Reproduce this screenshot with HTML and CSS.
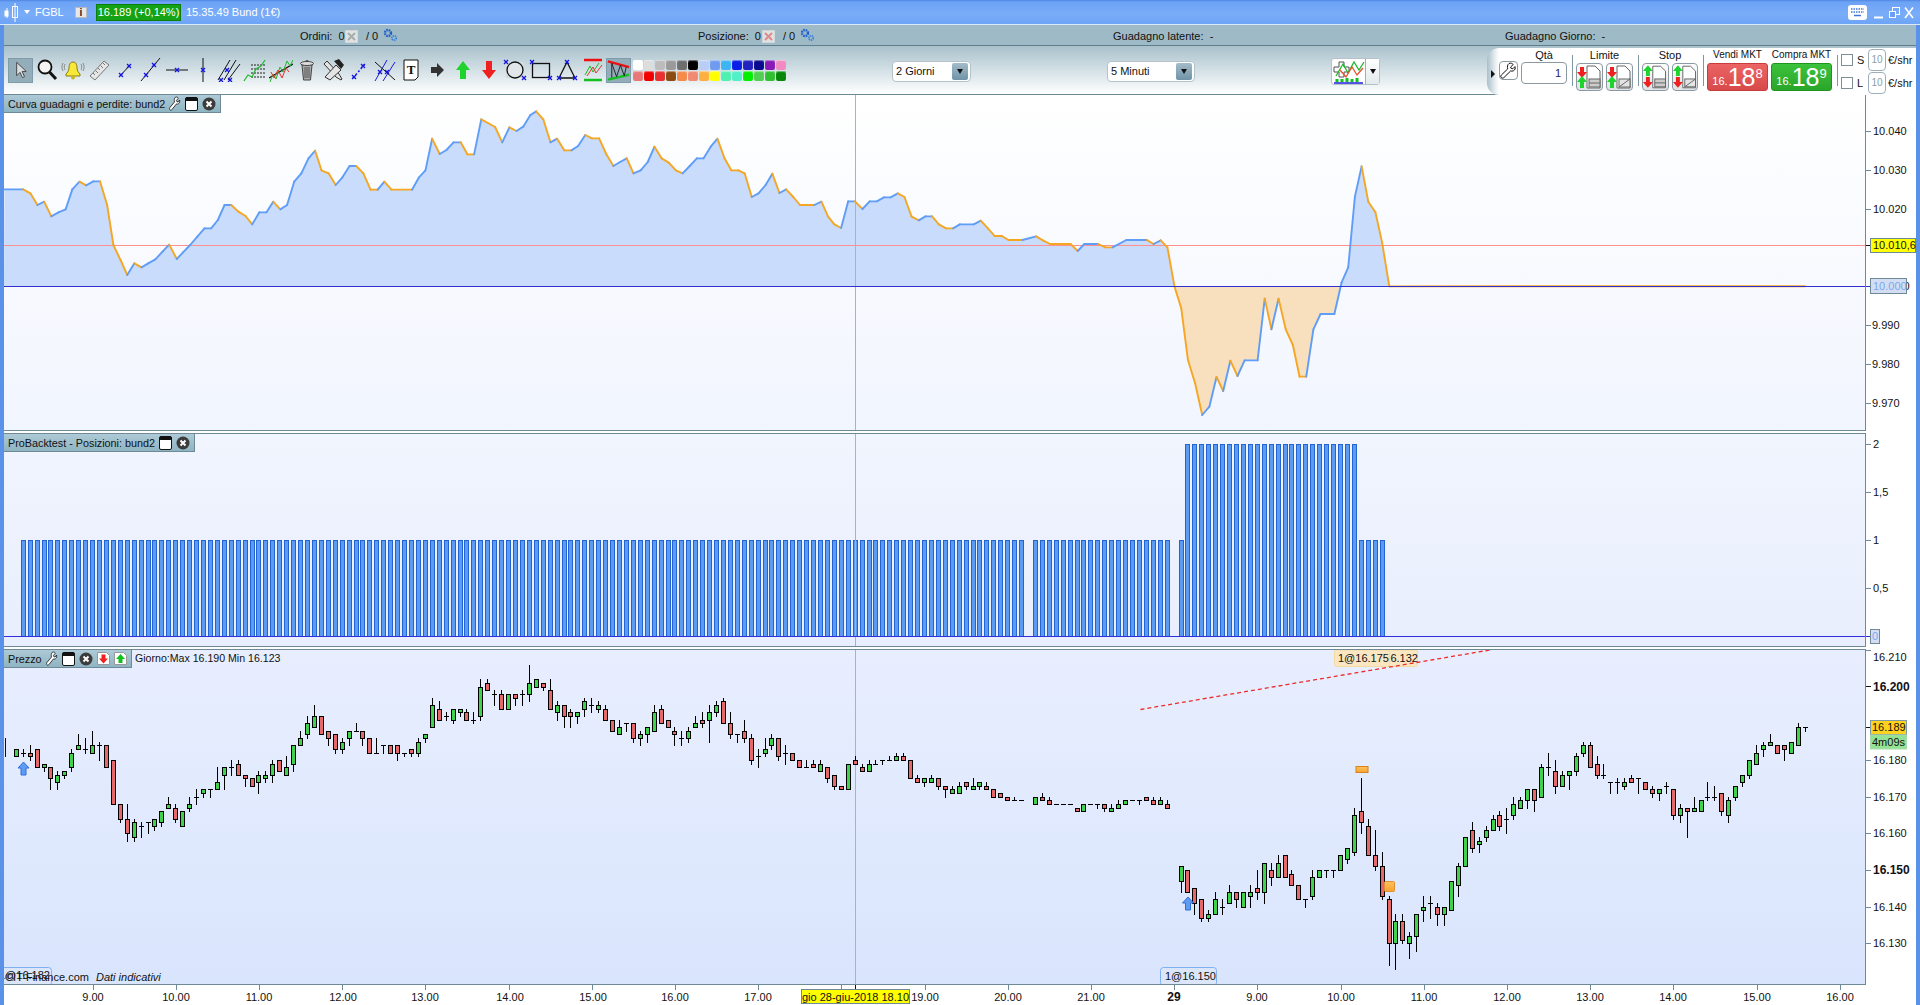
FILE: index.html
```html
<!DOCTYPE html>
<html lang="it">
<head>
<meta charset="utf-8">
<title>FGBL</title>
<link rel="stylesheet" href="styles.css">
</head>
<body>
<svg class="defs" width="0" height="0">
  <defs>
    <g id="xm"><path d="M-2-2 2 2M2-2-2 2" stroke="#1414e0" stroke-width="1.3" fill="none"/></g>
    <g id="gear"><circle cx="5" cy="5" r="3" fill="none" stroke="#1f5fc8" stroke-width="2.4" stroke-dasharray="1.6 .8"/><circle cx="11" cy="10" r="2.2" fill="none" stroke="#3a80d8" stroke-width="1.8" stroke-dasharray="1.3 .7"/></g>
    <g id="wrench"><path d="M9 1.5c2-.8 3.6 0 4.2 1L10.6 5l.6 1.4 1.6.4 2.2-2.2c.6 1.600 0 3.400-1.600 4.200-1 .5-2 .4-2.700.1L4 15.500c-.8.8-2 .8-2.700.1-.7-.8-.7-1.800.1-2.600l6.300-6.100C7.200 5 7.400 2.500 9 1.500z" fill="#fff" stroke="#111" stroke-width="1"/></g>
    <g id="win"><rect x=".5" y=".5" width="12" height="13" rx="1.500" fill="#fff" stroke="#111"/><rect x=".5" y=".5" width="12" height="3.500" rx="1" fill="#111"/></g>
    <g id="close"><circle cx="7" cy="7" r="6.500" fill="#3c3c3c"/><path d="M4.500 4.500 9.500 9.500M9.500 4.500 4.500 9.500" stroke="#fff" stroke-width="2"/></g>
    <linearGradient id="orange" x1="0" y1="0" x2="0" y2="1"><stop offset="0" stop-color="#ffc260"/><stop offset="1" stop-color="#f7a32c"/></linearGradient>
    <clipPath id="above"><rect x="4" y="95" width="1861" height="191"/></clipPath>
    <clipPath id="below"><rect x="4" y="286" width="1861" height="144"/></clipPath>
  </defs>
</svg>

<header class="titlebar">
  <svg class="ico-candle" width="16" height="20" viewBox="0 0 16 20"><path d="M3 6v10M11 1v19" stroke="#fff"/><rect x=".5" y="8.500" width="4" height="6" fill="#fff"/><rect x="8.500" y="4.500" width="5" height="11" fill="none" stroke="#fff"/></svg>
  <span class="caret"></span>
  <span class="sym">FGBL</span>
  <span class="info-i">i</span>
  <span class="quote">16.189 (+0,14%)</span>
  <span class="inst">15.35.49 Bund (1€)</span>
  <div class="winctl">
    <svg width="19" height="15" viewBox="0 0 19 15"><rect width="19" height="15" rx="3" fill="#fff"/><path d="M3 4h13M3 7h13" stroke="#3f78d8" stroke-width="1.500" stroke-dasharray="1.500 1"/><path d="M6 10.500h7" stroke="#3f78d8" stroke-width="1.500"/></svg>
    <svg class="wmin" width="9" height="15" viewBox="0 0 9 15"><path d="M0 12.500h9" stroke="#fff" stroke-width="2"/></svg>
    <svg class="wrest" width="11" height="15" viewBox="0 0 11 15"><rect x="3.500" y="2.500" width="7" height="7" fill="none" stroke="#fff"/><rect x=".5" y="6.500" width="6" height="6" fill="#6a9ff5" stroke="#fff"/></svg>
    <svg class="wclose" width="10" height="15" viewBox="0 0 10 15"><path d="M1 2.500 9 13M9 2.500 1 13" stroke="#fff" stroke-width="1.600"/></svg>
  </div>
</header>

<div class="content">
  <div class="infobar">
    <span class="i-ordini">Ordini: &nbsp;0</span>
    <svg class="i-x" width="13" height="13" viewBox="0 0 13 13"><rect width="13" height="13" fill="#dfe3e3" stroke="#c4cccc"/><path d="M3 3 10 10M10 3 3 10" stroke="#a7adad" stroke-width="2"/></svg>
    <span class="i-slash">/ 0</span>
    <svg width="16" height="16" viewBox="0 0 16 16"><use href="#gear"/></svg>
    <span class="i-pos">Posizione: &nbsp;0</span>
    <svg class="i-x" width="13" height="13" viewBox="0 0 13 13"><rect width="13" height="13" fill="#dfe3e3" stroke="#c4cccc"/><path d="M3 3 10 10M10 3 3 10" stroke="#e08a8a" stroke-width="2"/></svg>
    <span class="i-slash">/ 0</span>
    <svg width="16" height="16" viewBox="0 0 16 16"><use href="#gear"/></svg>
    <span class="i-lat">Guadagno latente: &nbsp;-</span>
    <span class="i-gio">Guadagno Giorno: &nbsp;-</span>
  </div>

  <div class="toolbar">
    <div class="tools">
      <div class="tool on"><svg width="24" height="24" viewBox="0 0 24 24"><path d="M8 4v14l3.500-3.500 2.500 5.500 2.200-1-2.500-5.500H18z" fill="#d8dde0" stroke="#444"/></svg></div>
      <div class="tool"><svg width="24" height="24" viewBox="0 0 24 24"><circle cx="10" cy="9" r="6.500" fill="#f4f4f4" stroke="#111" stroke-width="1.800"/><path d="M14.500 14 21 21" stroke="#111" stroke-width="3"/></svg></div>
      <div class="tool"><svg width="24" height="24" viewBox="0 0 24 24"><path d="M12 4c-3 0-4 3-4 6 0 3-2 5-3 6v2h14v-2c-1-1-3-3-3-6 0-3-1-6-4-6z" fill="#f7e83a" stroke="#8a7d10"/><circle cx="12" cy="19.500" r="2" fill="#c8b820"/><path d="M4 6c-1 2-1 4 0 6M2 5c-1.500 3-1.500 5 0 8M20 6c1 2 1 4 0 6M22 5c1.500 3 1.500 5 0 8" stroke="#777" fill="none" stroke-width=".8"/></svg></div>
      <div class="tool"><svg width="24" height="24" viewBox="0 0 24 24"><path d="M3 18 17 3l5 4L8 22z" fill="#e6e6e6" stroke="#777"/><path d="M6 15l2 2M8.500 12.500l2.500 2.500M11 10l2 2M13.500 7.500l2.500 2.500M16 5l2 2" stroke="#777"/></svg></div>
      <div class="tool"><svg width="24" height="24" viewBox="0 0 24 24"><path d="M6 19 18 6" stroke="#111"/><use href="#xm" x="8" y="17"/><use href="#xm" x="16" y="8"/></svg></div>
      <div class="tool"><svg width="24" height="24" viewBox="0 0 24 24"><path d="M2 23 21 0" stroke="#111"/><use href="#xm" x="7" y="17"/><use href="#xm" x="15" y="7"/></svg></div>
      <div class="tool"><svg width="24" height="24" viewBox="0 0 24 24"><path d="M1 12h22" stroke="#111"/><use href="#xm" x="12" y="12"/></svg></div>
      <div class="tool"><svg width="24" height="24" viewBox="0 0 24 24"><path d="M12 0v24" stroke="#111"/><use href="#xm" x="12" y="12"/></svg></div>
      <div class="tool"><svg width="24" height="24" viewBox="0 0 24 24"><path d="M1 22 13 2M7 22 19 2M11 22 23 6" stroke="#111" fill="none"/><use href="#xm" x="4" y="22"/><use href="#xm" x="10" y="12"/><use href="#xm" x="13" y="22"/></svg></div>
      <div class="tool"><svg width="24" height="24" viewBox="0 0 24 24"><path d="M8 7h14M8 11h14M8 15h14M8 19h14" stroke="#222" stroke-dasharray="2 1"/><path d="M1 23 5 17 9 19 13 11 18 8 22 2" stroke="#1fb82a" fill="none" stroke-width="1.200"/></svg></div>
      <div class="tool"><svg width="24" height="24" viewBox="0 0 24 24"><path d="M0 20 24 6" stroke="#111" stroke-width="1.200"/><path d="M1 24 4 16 7 21 11 9 14 14 18 3 21 8 24 2" stroke="#1fb82a" fill="none"/><path d="M2 14 5 20 9 12 13 20 17 10 20 14" stroke="#e83030" fill="none"/></svg></div>
      <div class="tool"><svg width="24" height="24" viewBox="0 0 24 24"><path d="M7 7h10l-1.500 15h-7z" fill="#aaa" stroke="#444"/><path d="M10 9v11M12 9v11M14 9v11" stroke="#555"/><ellipse cx="12" cy="5.500" rx="6.500" ry="2" fill="#ddd" stroke="#444"/><path d="M10 4c0-2 4-2 4 0" fill="none" stroke="#444"/></svg></div>
      <div class="tool"><svg width="24" height="24" viewBox="0 0 24 24"><path d="M3 6 6 3l12 13 3 5-1 1-5-3z" fill="#e4e4e4" stroke="#333"/><path d="M4 19 15 7l5 5-11 10z" fill="#e4e4e4" stroke="#333"/><path d="M13 3l5-2 5 6-3 4z" fill="#222"/></svg></div>
      <div class="tool"><svg width="24" height="24" viewBox="0 0 24 24"><path d="M6 20 18 6" stroke="#1a1ae0" stroke-dasharray="2 2" stroke-width="1.500"/><use href="#xm" x="7" y="19"/><use href="#xm" x="16" y="8"/></svg></div>
      <div class="tool"><svg width="24" height="24" viewBox="0 0 24 24"><path d="M2 23 14 2M10 23 22 4" stroke="#1a1ae0"/><path d="M2 4l20 18" stroke="#111"/><use href="#xm" x="7" y="14"/><use href="#xm" x="14" y="14"/></svg></div>
      <div class="tool"><svg width="24" height="24" viewBox="0 0 24 24"><path d="M5 2h14v17l-3 3H5z" fill="#fff" stroke="#111"/><text class="t-icon" x="12" y="16">T</text></svg></div>
      <div class="tool"><svg width="24" height="24" viewBox="0 0 24 24"><path d="M6 9h6V5l7 7-7 7v-4H6z" fill="#333"/></svg></div>
      <div class="tool"><svg width="24" height="24" viewBox="0 0 24 24"><path d="M12 3l7 9h-4v9H9v-9H5z" fill="#1ed32c"/></svg></div>
      <div class="tool"><svg width="24" height="24" viewBox="0 0 24 24"><path d="M12 21l7-9h-4V3H9v9H5z" fill="#ee2020"/></svg></div>
      <div class="tool"><svg width="24" height="24" viewBox="0 0 24 24"><rect x="3" y="4" width="18" height="16" fill="#d5dbe0"/><circle cx="12" cy="12" r="8" fill="#fff" fill-opacity=".3" stroke="#111" stroke-width="1.300"/><use href="#xm" x="3" y="4"/><use href="#xm" x="21" y="20"/></svg></div>
      <div class="tool"><svg width="24" height="24" viewBox="0 0 24 24"><rect x="3.500" y="5.500" width="17" height="14" fill="none" stroke="#111" stroke-width="1.300"/><use href="#xm" x="3" y="4"/><use href="#xm" x="21" y="20"/></svg></div>
      <div class="tool"><svg width="24" height="24" viewBox="0 0 24 24"><path d="M12 4 20 20H4z" fill="none" stroke="#111" stroke-width="1.300"/><use href="#xm" x="12" y="4"/><use href="#xm" x="4" y="20"/><use href="#xm" x="20" y="20"/></svg></div>
      <div class="tool"><svg width="24" height="24" viewBox="0 0 24 24"><path d="M3 2h18" stroke="#ee1010" stroke-width="2.500"/><path d="M3 22h18" stroke="#14c020" stroke-width="2.500"/><path d="M4 17 9 8 12 14 18 5" stroke="#14c020" fill="none"/><path d="M6 18 12 9 15 15 21 7" stroke="#e83030" fill="none"/></svg></div>
      <div class="tool on"><svg width="24" height="24" viewBox="0 0 24 24"><path d="M1 3 23 9" stroke="#ee1010" stroke-width="2.500"/><path d="M1 22 23 17" stroke="#14c020" stroke-width="2.500"/><path d="M5 5v15M5 5l5 14M10 19l4-12M14 7l4 11M18 18l2-9" stroke="#222" fill="none"/></svg></div>
    </div>
    <div class="swatches">
      <i class="c0"></i><i class="c1"></i><i class="c2"></i><i class="c3"></i><i class="c4"></i><i class="c5"></i><i class="c6"></i><i class="c7"></i><i class="c8"></i><i class="c9"></i><i class="c10"></i><i class="c11"></i><i class="c12"></i><i class="c13"></i>
      <i class="c14"></i><i class="c15"></i><i class="c16"></i><i class="c17"></i><i class="c18"></i><i class="c19"></i><i class="c20"></i><i class="c21"></i><i class="c22"></i><i class="c23"></i><i class="c24"></i><i class="c25"></i><i class="c26"></i><i class="c27"></i>
    </div>
    <div class="select sel1"><span>2 Giorni</span><b></b></div>
    <div class="select sel2"><span>5 Minuti</span><b></b></div>
    <div class="chartbtn">
      <svg width="33" height="27" viewBox="0 0 33 27"><path d="M2 9h5V4h5v5h5v5h-5v5H7v-5H2z" fill="#fff" stroke="#555"/><path d="M4 18 11 6 16 15 22 4 27 12 32 4" stroke="#1fb82a" fill="none" stroke-width="1.300"/><path d="M8 12 14 19 20 9 25 17 31 10" stroke="#e85030" fill="none" stroke-width="1.300"/><path d="M2 25h29" stroke="#1a1ae0" stroke-width="1.500"/><path d="M5 24v-3M10 24v-3M15 24v-4M20 24v-3M25 24v-4" stroke="#14c020" stroke-width="3"/></svg>
      <b></b>
    </div>
    <div class="order">
      <span class="arrow"></span>
      <button class="wr"><svg width="17" height="17" viewBox="0 0 17 17"><use href="#wrench"/></svg></button>
      <div class="grp qty"><label>Qtà</label><div class="qtybox">1</div></div>
      <span class="sep"></span>
      <div class="grp"><label>Limite</label><div class="pair">
        <button class="tb"><svg width="25" height="26" viewBox="0 0 25 26"><path d="M10 2h8l5 5v17H10z" fill="#fff" stroke="#666"/><path d="M3 3h4v5h3l-5 6-5-6h3z" fill="#ee2020"/><path d="M5 12l5 6H7v6H3v-6H0z" fill="#1ed32c"/><rect x="12" y="15" width="11" height="8" fill="#ccc" stroke="#666"/><path d="M12 19h11" stroke="#666"/></svg></button>
        <button class="tb"><svg width="25" height="26" viewBox="0 0 25 26"><path d="M10 2h8l5 5v17H10z" fill="#fff" stroke="#666"/><path d="M3 3h4v5h3l-5 6-5-6h3z" fill="#ee2020"/><path d="M5 12l5 6H7v6H3v-6H0z" fill="#1ed32c"/><rect x="12" y="15" width="11" height="8" fill="#e4e4e4" stroke="#666"/><path d="M12 23l11-8" stroke="#666"/></svg></button>
      </div></div>
      <span class="sep"></span>
      <div class="grp stop"><label>Stop</label><div class="pair">
        <button class="tb"><svg width="25" height="26" viewBox="0 0 25 26"><path d="M10 2h8l5 5v17H10z" fill="#fff" stroke="#666"/><path d="M5 1l5 6H7v5H3V7H0z" fill="#1ed32c"/><path d="M3 13h4v5h3l-5 6-5-6h3z" fill="#ee2020"/><rect x="12" y="15" width="11" height="8" fill="#ccc" stroke="#666"/><path d="M12 19h11" stroke="#666"/></svg></button>
        <button class="tb"><svg width="25" height="26" viewBox="0 0 25 26"><path d="M10 2h8l5 5v17H10z" fill="#fff" stroke="#666"/><path d="M5 1l5 6H7v5H3V7H0z" fill="#1ed32c"/><path d="M3 13h4v5h3l-5 6-5-6h3z" fill="#ee2020"/><rect x="12" y="15" width="11" height="8" fill="#e4e4e4" stroke="#666"/><path d="M12 23l11-8" stroke="#666"/></svg></button>
      </div></div>
      <span class="sep"></span>
      <div class="grp mktg"><label>Vendi MKT</label><div class="mkt sell"><small>16.</small><strong>18</strong><sup>8</sup></div></div>
      <div class="grp mktg"><label>Compra MKT</label><div class="mkt buy"><small>16.</small><strong>18</strong><sup>9</sup></div></div>
      <span class="sep"></span>
      <div class="sl">
        <div class="slrow"><span class="chk"></span><span class="sll">S</span><span class="ten">10</span><span>€/shr</span></div>
        <div class="slrow"><span class="chk"></span><span class="sll">L</span><span class="ten">10</span><span>€/shr</span></div>
      </div>
    </div>
  </div>

  <section class="panel p1">
    <div class="plot">
      <div class="tab"><span>Curva guadagni e perdite: bund2</span>
        <svg width="12" height="15" viewBox="0 0 17 17" preserveAspectRatio="none"><use href="#wrench"/></svg>
        <svg width="13" height="14" viewBox="0 0 13 14"><use href="#win"/></svg>
        <svg width="14" height="14" viewBox="0 0 14 14"><use href="#close"/></svg>
      </div>
      <svg id="equity" class="canvas" width="1861" height="335" viewBox="4 95 1861 335">
        <g id="fills"></g>
        <path d="M4 245.500H1865" stroke="#ff9090"/>
        <path d="M855.500 95V430" stroke="#ff9090"/>
        <g id="curve"></g>
        <path d="M4 286.500H1865" stroke="#3030d0"/>
      </svg>
    </div>
    <svg class="axis" width="50" height="336" viewBox="1866 95 50 336">
      <path d="M1866 131.500h5M1866 170.500h5M1866 209.500h5M1866 325.500h5M1866 364.500h5M1866 403.500h5" stroke="#6e8a98"/>
      <path d="M1866 245.500h5" stroke="#111"/>
      <text class="ax" x="1873" y="135">10.040</text>
      <text class="ax" x="1873" y="174">10.030</text>
      <text class="ax" x="1873" y="213">10.020</text>
      <text class="ax" x="1876" y="290">10.000</text>
      <text class="ax" x="1872" y="329">9.990</text>
      <text class="ax" x="1872" y="368">9.980</text>
      <text class="ax" x="1872" y="407">9.970</text>
      <rect x="1870.500" y="238.500" width="45" height="14" fill="#ffff00" stroke="#6e8a98"/>
      <text class="ax" x="1873" y="249">10.010,6</text>
      <path d="M1866 286.500h4" stroke="#3030d0"/>
      <rect x="1870.500" y="278.500" width="36" height="15" fill="#d3def2" stroke="#6e8a98"/>
      <text class="ax lb" x="1873" y="290">10.000</text>
    </svg>
  </section>

  <section class="panel p2">
    <div class="plot">
      <div class="tab"><span>ProBacktest - Posizioni: bund2</span>
        <svg width="13" height="14" viewBox="0 0 13 14"><use href="#win"/></svg>
        <svg width="14" height="14" viewBox="0 0 14 14"><use href="#close"/></svg>
      </div>
      <svg id="positions" class="canvas" width="1861" height="212" viewBox="4 434 1861 212">
        <g id="bars"></g>
        <path d="M855.500 434V646" stroke="#ff9090"/>
        <path d="M4 636.500H1865" stroke="#2f2fe0" stroke-width="1"/>
      </svg>
    </div>
    <svg class="axis" width="50" height="214" viewBox="1866 433 50 214">
      <path d="M1866 444.500h5M1866 492.500h5M1866 540.500h5M1866 588.500h5" stroke="#6e8a98"/>
      <text class="ax" x="1873" y="448">2</text>
      <text class="ax" x="1873" y="496">1,5</text>
      <text class="ax" x="1873" y="544">1</text>
      <text class="ax" x="1873" y="592">0,5</text>
      <path d="M1866 636.500h4" stroke="#2f2fe0"/>
      <rect x="1870.500" y="629.500" width="9" height="14" fill="#d3def2" stroke="#6e8a98"/>
      <text class="ax lb" x="1872" y="640">0</text>
    </svg>
  </section>

  <section class="panel p3">
    <div class="plot">
      <div class="tab"><span>Prezzo</span>
        <svg width="12" height="15" viewBox="0 0 17 17" preserveAspectRatio="none"><use href="#wrench"/></svg>
        <svg width="13" height="14" viewBox="0 0 13 14"><use href="#win"/></svg>
        <svg width="14" height="14" viewBox="0 0 14 14"><use href="#close"/></svg>
        <svg width="13" height="13" viewBox="0 0 13 13"><path d="M.5.5h9l3 3v9H.5z" fill="#fff" stroke="#999"/><path d="M4.500 2.500h4v4h2.500l-4.500 5-4.500-5h2.500z" fill="#ee2020"/></svg>
        <svg width="13" height="13" viewBox="0 0 13 13"><path d="M.5.500h9l3 3v9H.5z" fill="#fff" stroke="#999"/><path d="M6.500 2l4.500 5H8.500v4h-4V7H2z" fill="#12c020"/></svg>
      </div>
      <span class="daily">Giorno:Max 16.190 Min 16.123</span>
      <svg id="price" class="canvas" width="1861" height="334" viewBox="4 650 1861 334">
        <path d="M855.500 650V984" stroke="#ff9090"/>
        <g id="candles" shape-rendering="crispEdges"></g>
        <path d="M5.500 738v19" stroke="#111"/>
        <g class="arrow-up" transform="translate(23.500,762)"><path d="M0 0 5.500 6H2.500V13H-2.500V6H-5.500z" fill="#5e9bf2" stroke="#2f6fd8"/></g>
        <g class="arrow-up" transform="translate(1188,897)"><path d="M0 0 5.500 6H2.500V13H-2.500V6H-5.500z" fill="#5e9bf2" stroke="#2f6fd8"/></g>
        <rect x="1356" y="766.500" width="12" height="6" fill="url(#orange)" stroke="#d98020"/>
        <rect x="1384.500" y="881.500" width="10" height="10" rx="1" fill="url(#orange)" stroke="#e09030"/>
        <rect x="1360.500" y="650" width="57" height="16.500" rx="2" fill="#fbe6c2" stroke="#f6d9a0"/>
        <text class="ax" x="1367" y="662">1@16.132</text>
        <rect x="1334.500" y="650" width="55" height="16.500" rx="2" fill="#fbe6c2" stroke="#f6d9a0"/>
        <text class="ax" x="1338" y="662">1@16.175</text>
        <path d="M1140.500 709.500 1490 650" stroke="#ee2a2a" stroke-width="1.300" stroke-dasharray="4 3"/>
        <rect x="1160.500" y="967.500" width="56" height="18" rx="3" fill="#dbe6fb" stroke="#7fb0f0"/>
        <text class="ax" x="1165" y="980">1@16.150</text>
        <rect x="0" y="967.500" width="51.500" height="18" rx="3" fill="#dbe6fb" stroke="#7fb0f0"/>
        <text class="ax" x="-1" y="979">1@16.182</text>
        <text class="ax" x="5" y="981">©IT-Finance.com <tspan class="it" x="96">Dati indicativi</tspan></text>
      </svg>
    </div>
    <svg class="axis" width="50" height="336" viewBox="1866 649 50 336">
      <path d="M1866 650.500h5M1866 760.500h5M1866 797.500h5M1866 833.500h5M1866 870.500h5M1866 907.500h5M1866 943.500h5" stroke="#6e8a98"/>
      <path d="M1866 686.500h5" stroke="#111"/>
      <text class="ax" x="1873" y="661">16.210</text>
      <text class="ax axb" x="1873" y="691">16.200</text>
      <text class="ax" x="1873" y="764">16.180</text>
      <text class="ax" x="1873" y="801">16.170</text>
      <text class="ax" x="1873" y="837">16.160</text>
      <text class="ax axb" x="1873" y="874">16.150</text>
      <text class="ax" x="1873" y="911">16.140</text>
      <text class="ax" x="1873" y="947">16.130</text>
      <path d="M1866 727.500h5" stroke="#111"/>
      <rect x="1870.500" y="720.500" width="36" height="14" fill="#ffd21e" stroke="#7f98a6"/>
      <text class="ax" x="1872" y="731">16.189</text>
      <rect x="1870.500" y="735" width="36" height="14" fill="#94e394" stroke="#a8dca8"/>
      <text class="ax" x="1872" y="746">4m09s</text>
    </svg>
  </section>

  <svg id="timeaxis" class="timeaxis" width="1912" height="20" viewBox="4 985 1912 20">
    <path id="ticks" d="M93.500 985v5M176.500 985v5M259.500 985v5M342.500 985v5M425.500 985v5M509.500 985v5M592.500 985v5M675.500 985v5M758.500 985v5M841.500 985v5M925.500 985v5M1008.500 985v5M1091.500 985v5M1174.500 985v5M1257.500 985v5M1341.500 985v5M1424.500 985v5M1507.500 985v5M1590.500 985v5M1673.500 985v5M1757.500 985v5M1840.500 985v5" stroke="#6e8a98"/>
    <g class="tl">
      <text class="ax" x="93" y="1001">9.00</text><text class="ax" x="176" y="1001">10.00</text><text class="ax" x="259" y="1001">11.00</text><text class="ax" x="343" y="1001">12.00</text><text class="ax" x="425" y="1001">13.00</text><text class="ax" x="510" y="1001">14.00</text><text class="ax" x="593" y="1001">15.00</text><text class="ax" x="675" y="1001">16.00</text><text class="ax" x="758" y="1001">17.00</text><text class="ax" x="925" y="1001">19.00</text><text class="ax" x="1008" y="1001">20.00</text><text class="ax" x="1091" y="1001">21.00</text><text class="ax axb" x="1174" y="1001">29</text><text class="ax" x="1257" y="1001">9.00</text><text class="ax" x="1341" y="1001">10.00</text><text class="ax" x="1424" y="1001">11.00</text><text class="ax" x="1507" y="1001">12.00</text><text class="ax" x="1590" y="1001">13.00</text><text class="ax" x="1673" y="1001">14.00</text><text class="ax" x="1757" y="1001">15.00</text><text class="ax" x="1840" y="1001">16.00</text>
    </g>
    <path d="M855.500 985v5" stroke="#111"/>
    <rect x="801.500" y="989.500" width="108" height="14" fill="#ffff00" stroke="#6e8a98"/>
    <text class="ax mid" x="855.500" y="1001">gio 28-giu-2018 18.10</text>
  </svg>
</div>
<script src="chart.js"></script>
</body>
</html>
```

FILE: styles.css
```css
* { box-sizing: border-box; }
html, body { margin: 0; padding: 0; }
body {
  width: 1920px; height: 1005px; overflow: hidden;
  background: #5a92ea;
  font: 11px "Liberation Sans", Arial, sans-serif;
  color: #111;
}
.defs { display: block; height: 0; }

/* title bar */
.titlebar {
  height: 25px; display: flex; align-items: center; color: #fff;
  padding-left: 4px;
  background: linear-gradient(#4f86e2 0, #6da3f5 2px, #79adf9 60%, #6ea4f6 100%);
  border-bottom: 1px solid #d9e8fb;
}
.caret { width: 0; height: 0; margin-left: 4px; border: 3.5px solid transparent; border-top: 4px solid #fff; border-bottom: 0; }
.sym { margin-left: 5px; width: 40px; }
.info-i { width: 12px; height: 11px; background: #e8e8e8; border: 1px solid #bbb; color: #222; font-weight: bold; font-size: 10px; line-height: 9px; text-align: center; }
.quote { margin-left: 9px; width: 85px; height: 17px; line-height: 15px; text-align: center; font-size: 11px; white-space: nowrap; background: #14a314; border: 1px solid #0d7d0d; }
.inst { margin-left: 5px; }
.winctl { margin-left: auto; margin-right: 6px; display: flex; align-items: center; }
.wmin { margin-left: 7px; }
.wrest { margin-left: 6px; }
.wclose { margin-left: 4px; }

.content { padding: 0 4px; }

/* info bar */
.infobar {
  height: 21px; padding-top: 2px; display: flex; align-items: center; white-space: nowrap;
  background: #9ebac6; border-bottom: 1px solid #5f7f8f;
}
.i-ordini { margin-left: 296px; width: 45px; }
.i-x { flex: none; }
.i-slash { margin-left: 8px; width: 17px; }
.i-pos { margin-left: 299px; width: 64px; }
.i-lat { margin-left: 297px; width: 392px; }

/* toolbar */
.toolbar {
  height: 49px; display: flex; align-items: center;
  padding-left: 4px;
  background: linear-gradient(#a9c1cc, #d7e3e8 55%, #fff);
  border-bottom: 1px solid #6e8a98;
}
.tools { display: flex; gap: 1px; }
.tool { width: 25px; height: 25px; display: flex; align-items: center; justify-content: center; }
.tool.on { background: #93adba; border: 1px solid #7f9aa8; }
.t-icon { font: bold 13px "Liberation Serif", serif; text-anchor: middle; fill: #111; }

.swatches { margin-left: 2px; display: grid; grid-template-columns: repeat(14, 11px); gap: 1px 0; }
.swatches i { display: block; width: 10px; height: 10px; border-radius: 2px; box-shadow: inset 0 1px 1px rgba(255,255,255,.45); }
.c0{background:#fff}.c1{background:#dcdcdc}.c2{background:#bcbcbc}.c3{background:#9a9a9a}.c4{background:#6e6e6e}.c5{background:#000}.c6{background:#b9cdf7}.c7{background:#6f9bf0}.c8{background:#3fb4f5}.c9{background:#0a1ee8}.c10{background:#2222c0}.c11{background:#0a0a90}.c12{background:#8a1ab8}.c13{background:#f08ac0}
.c14{background:#e87878}.c15{background:#f00000}.c16{background:#e83030}.c17{background:#8a4a10}.c18{background:#f58a4a}.c19{background:#f08a70}.c20{background:#fdb040}.c21{background:#ffff00}.c22{background:#50f0b0}.c23{background:#50f0c8}.c24{background:#00f000}.c25{background:#50d050}.c26{background:#30c030}.c27{background:#088808}

.select {
  height: 21px; margin-top: 2px; display: flex; align-items: center; justify-content: space-between;
  background: #fff; border: 1px solid #b4c2ca; border-radius: 4px; padding: 0 2px 0 3px;
}
.sel1 { margin-left: 105px; width: 79px; }
.sel2 { margin-left: 136px; width: 88px; }
.select b { width: 16px; height: 17px; border-radius: 2px; background: linear-gradient(#a3bcc9, #6f93a8); position: relative; display: flex; align-items: center; justify-content: center; }
.select b::after, .chartbtn b::after { content: ""; border: 3.5px solid transparent; border-top: 5px solid #111; border-bottom: 0; }
.chartbtn { margin: 2px 0 0 136px; width: 49px; height: 27px; display: flex; align-items: center; background: #fff; border: 1px solid #b4c2ca; border-radius: 3px; }
.chartbtn b { flex: 1; height: 100%; border-left: 1px solid #9fb0b9; display: flex; align-items: center; justify-content: center; background: linear-gradient(#fff, #e3e9ec); }

/* order panel */
.order {
  margin: 0 0 -1px auto; width: 429px; height: 47px; align-self: flex-end;
  display: flex; align-items: flex-start; gap: 3px; padding-left: 4px;
  background: linear-gradient(90deg, #a9bfca, #e6edf0 8px, #fff 12px);
  border-radius: 12px 0 0 12px;
}
.arrow { margin: 22px 1px 0 0; width: 0; height: 0; border: 4px solid transparent; border-left: 4px solid #111; border-right: 0; }
button { margin: 0; padding: 0; font: inherit; }
.wr { margin-top: 13px; width: 19px; height: 19px; background: #fff; border: 1px solid #8b9aa2; border-radius: 4px; display: flex; align-items: center; justify-content: center; }
.grp { display: flex; flex-direction: column; gap: 1px; }
.grp label { height: 14px; line-height: 14px; text-align: center; white-space: nowrap; }
.qty { width: 46px; }
.qtybox { margin-top: -1px; height: 22px; line-height: 20px; text-align: right; padding-right: 5px; color: #2a1a55; border: 1px solid #8b9aa2; border-radius: 4px; background: #fff; }
.sep { margin: 7px 0 0 2px; width: 1px; height: 31px; background: #7f97a3; }
.pair { display: flex; gap: 3px; }
.tb { width: 27px; height: 28px; display: flex; align-items: center; justify-content: center; background: linear-gradient(#fff, #dfe3e5); border: 1px solid #8b9aa2; border-radius: 4px; }
.stop .tb { width: 26.5px; }
.mktg { width: 61px; }
.mktg label { font-size: 10px; }
.mkt { width: 61px; height: 28px; display: flex; align-items: flex-start; justify-content: center; color: #fff; border-radius: 3px; line-height: 1; }
.mkt small { font-size: 11px; margin-top: 12px; }
.mkt strong { font-size: 25px; font-weight: normal; margin-top: 1px; }
.mkt sup { font-size: 13px; margin-top: 3px; vertical-align: baseline; }
.sell { background: linear-gradient(#ec6464, #d84a4a); border: 1px solid #c83c3c; }
.buy { background: linear-gradient(#3cc23c, #2aa62a); border: 1px solid #1f951f; }
.sl { margin-top: 1px; display: flex; flex-direction: column; gap: 1px; }
.slrow { height: 22px; display: flex; align-items: center; white-space: nowrap; }
.chk { width: 12px; height: 12px; background: #fff; border: 1px solid #7f8f97; }
.sll { margin-left: 4px; width: 11px; }
.ten { width: 18px; height: 22px; line-height: 20px; text-align: center; color: #8aa0ac; font-size: 10px; border: 1px solid #9db0ba; border-radius: 4px; margin-right: 2px; }

/* panels */
.panel { display: flex; background: #fff; }
.p2, .p3 { padding-top: 2px; }
.plot { position: relative; width: 1862px; border-right: 1px solid #6e8a98; border-bottom: 1px solid #6e8a98; }
.p2 .plot, .p3 .plot { border-top: 1px solid #6e8a98; }
.p1 .plot { height: 336px; background: linear-gradient(#fff, #f1f5fe); }
.p2 .plot { height: 214px; background: linear-gradient(#f1f5fe, #e8eefd); }
.p3 .plot { height: 336px; background: linear-gradient(#e8eefe, #d9e5fd); }
.canvas { display: block; }
.axis { display: block; flex: none; }
.tab {
  position: absolute; left: 0; top: 0; height: 18px; display: flex; align-items: center; gap: 4px;
  padding: 0 4px; white-space: nowrap; font-size: 10.8px;
  background: linear-gradient(#aecad6, #8fb4c2);
  border-right: 1px solid #6e8a98; border-bottom: 1px solid #6e8a98;
}
.daily { position: absolute; left: 131px; top: 2px; font-size: 10.6px; }
.timeaxis { display: block; background: #fff; }

.ax { font: 11px "Liberation Sans", Arial, sans-serif; fill: #111; }
.axb { font-weight: bold; font-size: 12px; }
.lb { fill: #7ba8ef; }
.mid { text-anchor: middle; }
.tl .ax { text-anchor: middle; }
.it { font-style: italic; }
```

FILE: chart.js
```js
var NS = 'http://www.w3.org/2000/svg';
function el(tag, attrs, parent) {
  var e = document.createElementNS(NS, tag);
  for (var k in attrs) e.setAttribute(k, attrs[k]);
  parent.appendChild(e);
  return e;
}
var X0 = 16.3, DX = 6.933;
function xi(i) { return X0 + (i - 1) * DX; }

/* equity curve: sampled points */
var a = [[10,283],[52,283],[68,295],[84,330],[99,320],[115,364],[131,352],[147,343],[162,283],[178,260],[193,271],[209,259],[224,259],[240,330],[254,450],[270,495],[285,540],[301,505],[317,517],[332,505],[348,493],[364,470],[379,449],[396,492],[410,472],[426,450],[442,425],[458,400],[473,400],[488,375],[503,330],[518,330],[534,350],[550,363],[565,388],[581,352],[597,352],[612,320],[628,343],[643,330],[659,260],[675,235],[691,190],[706,167],[720,226],[736,235],[752,270],[767,247],[783,213],[798,213],[814,235],[830,284],[846,284],[861,260],[877,284],[923,284],[938,248],[953,226],[968,131],[985,177],[1000,165],[1016,142],[1032,142],[1047,178],[1062,178],[1078,73],[1093,84],[1109,96],[1125,142],[1141,97],[1157,108],[1172,95],[1188,60],[1201,49],[1217,73],[1233,142],[1248,131],[1264,166],[1280,166],[1295,153],[1311,120],[1326,130],[1342,130],[1358,177],[1374,213],[1389,201],[1404,190],[1419,235],[1435,226],[1451,201],[1466,155],[1482,190],[1498,203],[1514,226],[1529,235],[1545,213],[1561,190]];
var b = [[8,190],[24,155],[39,131],[55,190],[70,226],[86,226],[100,235],[116,306],[131,295],[147,270],[162,236],[178,294],[193,283],[209,306],[224,330],[256,330],[272,320],[287,365],[301,388],[316,399],[332,319],[347,319],[364,342],[380,319],[396,319],[412,307],[427,307],[443,295],[458,306],[474,365],[490,376],[505,364],[520,364],[535,388],[551,400],[567,400],[582,388],[613,388],[629,377],[645,400],[660,423],[676,423],[691,435],[722,435],[753,424],[769,437],[784,447],[830,447],[846,468],[861,447],[892,447],[908,457],[924,457],[955,435],[1001,435],[1016,447],[1032,436],[1047,457],[1063,575],[1078,640],[1093,795],[1109,865],[1125,960],[1141,935],[1157,846],[1172,888],[1188,797],[1204,843],[1220,796],[1249,796],[1265,611],[1280,703],[1296,611],[1312,703],[1328,750],[1343,845],[1358,845],[1374,703],[1390,657],[1421,657],[1437,563],[1452,517],[1467,305],[1482,214],[1497,320],[1513,352],[1528,443],[1544,574]];
var pts = a.map(function (p) { return [p[0] / 2.24, 95 + p[1] / 3]; })
  .concat(b.map(function (p) { return [700 + p[0] / 2.24, 95 + p[1] / 3]; }));
pts.push([1805, 286.3]);

var fills = document.getElementById('fills');
var poly = pts.map(function (p) { return p[0] + ',' + p[1]; }).join(' ') + ' 1805,286 4,286';
el('polygon', { points: poly, fill: '#c9dcfb', 'clip-path': 'url(#above)' }, fills);
el('polygon', { points: poly, fill: '#f8dfbd', 'clip-path': 'url(#below)' }, fills);

var curve = document.getElementById('curve');
var last = '#5f9df7';
for (var n = 1; n < pts.length; n++) {
  var p = pts[n - 1], q = pts[n];
  if (q[1] < p[1] - 0.1) last = '#5f9df7';
  else if (q[1] > p[1] + 0.1) last = '#f5a623';
  el('line', { x1: p[0], y1: p[1], x2: q[0], y2: q[1], stroke: last, 'stroke-width': 1.9, 'stroke-linecap': 'round' }, curve);
}

/* positions */
var bars = document.getElementById('bars');
function bar(i, top) {
  var x = Math.floor(xi(i)) - 2;
  el('rect', { x: x + 0.5, y: top + 0.5, width: 4, height: 636 - top, fill: '#5b9bf4', stroke: '#2464d2' }, bars);
}
for (var i = 2; i <= 198; i++) {
  if (i === 147 || i === 168) continue;
  bar(i, (i >= 170 && i <= 194) ? 444 : 540);
}

/* candles: [kind, bodyTop, bodyBottom, high, low] in ticks of 0.001 above 16.000 */
var C = [
['g',183,181],['d',182,182,183,181],['r',182,181,184,180],['r',183,178],['g',179,178,179,177],['r',178,175,178,172],['g',176,174,177,172],['g',177,176,177,175],['g',182,178,183,177],['g',184,183,187,183],
['d',183,183,186,182],['g',184,182,188,182],['d',184,184,185,180],['r',184,178],['r',180,168],['r',168,164,168,163],['r',164,160,168,158],['g',163,159,164,158],['d',162,162,163,159],['d',163,163,163,160],
['g',164,162,164,161],['g',166,163,166,162],['g',168,167,170,167],['r',167,164,168,163],['g',166,162],['g',168,167,170,166],['d',170,170,172,168],['g',172,171,172,170],['d',172,172,172,170],['g',174,172,178,172],
['g',178,176,178,172],['d',178,178,180,176],['r',179,176,180,176],['r',176,175,176,173],['r',175,173],['g',176,174,177,171],['g',176,175,177,174],['g',179,176,180,174],['r',180,177],['g',178,176,181,176],
['g',184,179,184,177],['g',186,184,188,184],['g',190,187,192,186],['g',192,189,195,189],['r',192,187],['r',188,186,188,184],['r',187,183,187,182],['g',185,183,186,182],['g',188,186,188,184],['d',188,188,190,188],
['r',188,186,188,184],['r',186,182],['d',182,182,186,182],['d',184,184,184,182],['r',184,182],['r',184,182,184,180],['d',182,182,182,181],['r',183,182,183,181],['g',185,182,186,181],['g',187,186,187,185],
['g',195,189,197,189],['r',194,191,196,191],['d',192,192,193,191],['g',194,191,194,190],['g',194,193,194,192],['r',193,191,194,191],['d',191,191,193,190],['g',200,192,202,191],['r',201,199,202,199],['d',198,198,199,195],
['r',198,194,199,194],['g',198,194],['r',198,197,198,195],['d',198,198,199,195],['g',201,198,206,196],['g',202,200],['r',201,200,201,199],['r',199,194,202,194],['g',195,193,196,191],['r',195,192,195,189],
['r',193,192,194,189],['g',193,192,193,190],['g',196,194,197,192],['d',195,195,197,193],['g',195,194,196,193],['r',194,191,195,191],['r',191,188],['g',189,187,191,187],['d',190,190,190,188],['r',190,186,190,185],
['g',187,186,188,184],['g',189,187,189,185],['g',193,188,195,188],['r',194,190,195,190],['r',191,189],['r',188,187,189,184],['d',186,186,188,184],['g',188,186,189,185],['g',190,189,192,189],['r',191,190,193,189],
['g',193,191,195,185],['g',195,193,196,192],['r',196,190,197,190],['r',190,187,193,186],['d',187,187,187,185],['r',188,186,191,185],['r',186,180,187,179],['d',181,181,183,178],['g',183,182,186,181],['g',186,184,187,183],
['r',186,181,186,180],['d',182,182,184,179],['r',182,180],['r',180,178],['d',178,178,180,178],['r',179,178,180,178],['g',179,177,180,177],['r',178,175,178,174],['r',176,173,176,172],['r',173,172],
['g',179,172],['r',180,179,181,179],['r',178,177,179,177],['g',179,177,180,177],['d',179,179,180,179],['d',180,180,180,179],['d',180,180,181,180],['g',181,180,182,180],['r',181,180,182,180],['r',180,175],
['r',175,174,176,174],['g',175,174,175,173],['g',175,174,176,174],['r',175,173,175,172],['r',173,172,173,170],['g',172,171,173,171],['g',173,171,174,171],['r',174,173,174,172],['g',173,172,175,172],['g',174,173,174,172],
['r',173,172,174,172],['r',172,170],['r',171,170],['r',170,169],['d',169,169,170,169],['d',169,169],null,['g',170,168],['r',170,169,171,169],['r',169,168,170,168],
['d',168,168],['d',168,168],['d',168,168],['r',167,166],['g',168,166],['d',168,168],['d',168,168,168,167],['r',168,167,168,166],['g',167,166,168,166],['g',168,167,169,167],
['g',169,168],['d',169,169],['d',169,169,169,168],['r',170,169],['r',169,168,170,168],['g',169,168,170,168],['r',168,167,169,167],null,['g',151,147,151,144],['r',150,144],
['r',145,141,145,138],['r',142,137,142,136],['g',138,137,139,136],['g',142,138,144,138],['d',140,140,142,138],['g',144,141,146,141],['r',144,142,144,140],['g',144,140],['g',144,143,146,140],['r',145,144,150,142],
['g',152,144,152,141],['r',150,148,152,146],['g',152,148,154,148],['r',154,148],['r',149,146,150,146],['r',146,142],['d',142,142,142,140],['g',148,143,150,142],['g',150,148],['d',150,150,150,148],
['d',150,150,150,148],['g',154,150],['g',156,153,156,152],['g',165,155,167,154],['r',166,163,175,160],['r',162,154,164,154],['r',154,151,161,150],['r',151,143,155,142],['r',142,130,143,124],['g',136,130,138,123],
['r',136,131,138,130],['g',132,130,133,126],['g',138,132,138,128],['g',140,139,143,136],['d',141,141,143,137],['r',140,138,141,135],['g',140,138,140,135],['g',147,139],['g',151,146,152,143],['g',159,151],
['r',161,156,163,155],['g',158,157,159,155],['g',161,159,162,158],['g',164,161,165,161],['r',165,162,166,161],['d',164,164,167,160],['g',168,165,170,164],['g',169,167,170,167],['g',172,169,172,167],['r',172,169,172,166],
['g',178,170,179,170],['d',178,178,182,176],['r',177,173,180,171],['g',176,173,177,173],['g',177,176,177,172],['g',181,177,182,176],['g',184,182,185,181],['r',184,178,185,178],['r',179,176,181,175],['d',176,176,179,175],
['d',174,174,174,171],['d',174,174,175,171],['g',174,173,175,172],['r',175,174,176,174],['d',175,175,175,171],['r',174,172],['r',172,171,173,170],['g',172,171,172,169],['d',173,173,174,171],['r',172,165,172,164],
['g',167,165,168,163],['r',167,166,167,159],['g',167,166,170,166],['g',169,166],['d',170,170,174,169],['d',170,170,173,169],['r',171,166,171,165],['g',169,165,170,163],['g',173,170,173,169],['g',176,174,176,173],
['g',180,176,180,175],['g',182,179,184,179],['g',184,183,185,181],['g',185,184,187,184],['r',184,182],['r',184,183,184,180],['g',185,182],['g',189,184,190,184],['d',189,189,189,188]
];
function yt(t) { return Math.round(870 - (t - 150) * 3.667); }
var cg = document.getElementById('candles');
C.forEach(function (c, k) {
  if (!c) return;
  var X = Math.floor(xi(k + 1));
  var top = yt(c[1]), bot = yt(c[2]);
  var hi = yt(c.length > 3 ? c[3] : c[1]), lo = yt(c.length > 4 ? c[4] : c[2]);
  if (hi !== lo) el('rect', { x: X, y: hi, width: 1, height: lo - hi + 1, fill: '#000' }, cg);
  if (c[0] === 'd') {
    el('rect', { x: X - 2, y: top, width: 5, height: 1, fill: '#000' }, cg);
  } else {
    el('rect', { x: X - 2, y: top, width: 5, height: bot - top + 1, fill: '#000' }, cg);
    el('rect', { x: X - 1, y: top + 1, width: 3, height: Math.max(bot - top - 1, 1), fill: c[0] === 'g' ? '#41d24c' : '#e66868' }, cg);
  }
});
```
